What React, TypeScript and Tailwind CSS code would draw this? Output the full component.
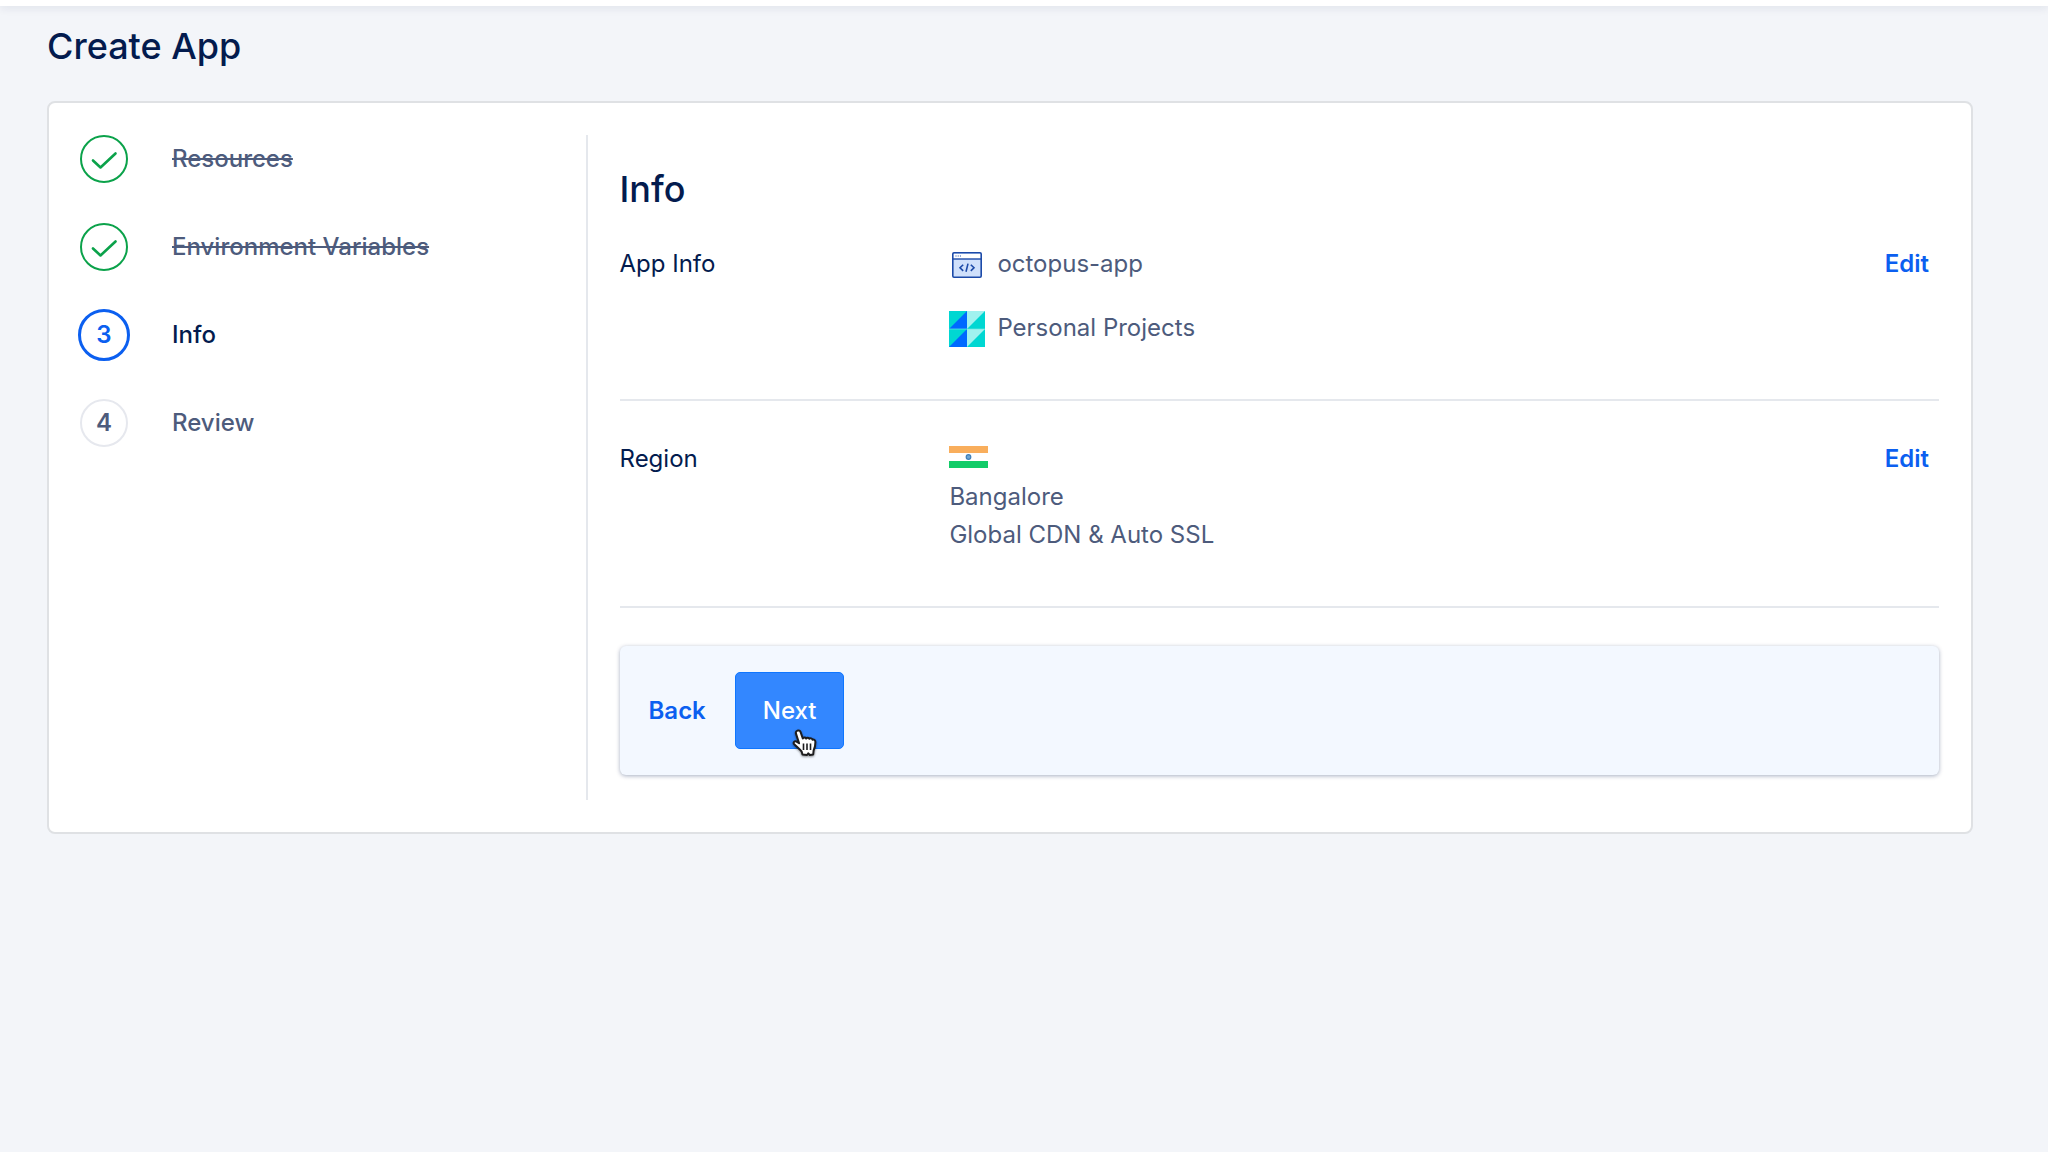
import type { ReactNode } from "react";

type StepState = "done" | "active" | "todo";

const steps: { label: string; state: StepState }[] = [
  { label: "Resources", state: "done" },
  { label: "Environment Variables", state: "done" },
  { label: "Info", state: "active" },
  { label: "Review", state: "todo" },
];

const circleStyle: Record<StepState, string> = {
  done: "size-12 border-2 border-[#0ba24a] text-[#0ba24a]",
  active: "size-[52px] border-3 border-[#0b5ff0] font-semibold text-[#0b5ff0]",
  todo: "size-12 border-2 border-[#e6e8ee] font-semibold text-[#4d5b7c]",
};

const labelStyle: Record<StepState, string> = {
  done: "text-[#4d5b7c] line-through decoration-2",
  active: "text-[#031b4e]",
  todo: "text-[#4d5b7c]",
};

function CheckIcon() {
  return (
    <svg viewBox="0 0 48 48" className="size-12 shrink-0" fill="none" stroke="currentColor" strokeWidth="2.6" strokeLinecap="round" strokeLinejoin="round" aria-hidden="true">
      <path d="M13 25.5 20.5 32.5 35.5 18.5" />
    </svg>
  );
}

function AppIcon() {
  return (
    <svg viewBox="0 0 36 36" className="size-9" fill="none" aria-hidden="true">
      <rect x="3.8" y="6.8" width="28.4" height="24.4" rx="1.2" fill="#cfe0fb" />
      <path d="M4 8h28v5H4z" fill="#fff" />
      <rect x="3.8" y="6.8" width="28.4" height="24.4" rx="1.2" stroke="#1c4aa8" strokeWidth="1.6" />
      <path d="M4 13h28" stroke="#1c4aa8" strokeWidth="1.4" />
      <path d="M6.5 10h1M8.7 10h1M10.9 10h1" stroke="#1c4aa8" strokeWidth="1.2" />
      <path d="M14.2 18.7 11 21.8l3.2 3.1M21.8 18.7l3.2 3.1-3.2 3.1M19 17.6l-2 8.2" stroke="#1c4aa8" strokeWidth="1.6" />
    </svg>
  );
}

function ProjectIcon() {
  return (
    <svg viewBox="0 0 36 36" className="mt-0.5 size-9" aria-hidden="true">
      <path d="M0 0h18v36H0z" fill="#0069ff" />
      <path d="M0 0h18L0 18zM0 18h18L0 36z" fill="#00d7d2" />
      <path d="M18 0h18v36H18z" fill="#00d7d2" />
      <path d="M18 0h18L18 18zM18 18h18L18 36z" fill="#a0f2ef" />
      <path d="M0 18h36" stroke="#6fe6e4" strokeWidth=".7" />
    </svg>
  );
}

function IndiaFlag() {
  return (
    <svg viewBox="0 0 39 22" className="h-[22px] w-[39px]" role="img" aria-label="India">
      <path d="M0 0h39v22H0z" fill="#fff" />
      <path d="M0 0h39v7H0z" fill="#f9ae5c" />
      <path d="M0 15h39v7H0z" fill="#12cc68" />
      <circle cx="19.5" cy="11" r="2.3" fill="#6fa6d3" stroke="#3f7fb8" strokeWidth="1.2" />
    </svg>
  );
}

function HandCursor() {
  return (
    <svg viewBox="0 0 26 28" className="pointer-events-none absolute top-14 left-14 h-7 w-[26px] drop-shadow-[0_1px_1px_rgba(0,0,0,0.45)]" aria-hidden="true">
      <path
        d="M5.400 1.700c1.400-.6 2.700.1 3.200 1.500l2.200 6.300c.7-1.100 2.700-1.300 3.300 0 .9-1.100 2.700-1 3.300.3 1-.9 2.700-.5 3.100.9 1.600-.5 2.900.5 2.900 2.200 0 4-.5 6-1.800 8.600l-.4 4-3.400.5-1.500-1.700-1.300 1.700-4.500-.4-.8-2.900C8 20.300 5 18.200 1.900 14.900c-.8-1.600.6-3.100 2.200-2.500l3 1.800L3.900 4.400c-.3-1.200.3-2.200 1.500-2.700z"
        fill="#fff"
        stroke="#1d1d1f"
        strokeWidth="2"
        strokeLinejoin="round"
      />
      <path d="M11.500 14.500v6.500M15 14.500v6.500M18.500 14.500v6.500" stroke="#1d1d1f" strokeWidth="1.600" />
    </svg>
  );
}

function InfoRow({ label, children }: { label: string; children: ReactNode }) {
  return (
    <div className="flex border-b-2 border-[#e5e8ed] pb-[52px] leading-[38px]">
      <dt className="w-1/4 shrink-0 text-[#031b4e]">{label}</dt>
      <dd className="min-w-0 grow text-[#4d5b7c]">{children}</dd>
      <dd className="shrink-0 pr-[10px]">
        <a href="#edit" aria-label={"Edit " + label} className="font-semibold text-[#0b5ff0]">
          Edit
        </a>
      </dd>
    </div>
  );
}

export default function App() {
  return (
    <div className="min-h-screen bg-[#f3f5f9] font-['Inter',sans-serif] text-[24px]">
      <div className="h-1.5 bg-white shadow-[0_2px_8px_rgba(3,27,78,0.1)]" />
      <main className="pr-[75px] pb-12 pl-[47px]">
        <h1 className="pt-4 text-[36px] leading-[48px] font-medium text-[#031b4e]">Create App</h1>

        <div className="mt-[31px] grid grid-cols-[3fr_8fr] rounded-lg border-2 border-[#dfe1e4] bg-white py-8 pr-8 pl-[29px]">
          <ol>
            {steps.map((step, i) => (
              <li key={step.label} aria-current={step.state === "active" ? "step" : undefined} className="mb-10 flex h-12 items-center font-medium">
                <span className="flex w-[52px] shrink-0 justify-center">
                  <span className={"flex shrink-0 items-center justify-center rounded-full " + circleStyle[step.state]}>
                    {step.state === "done" ? <CheckIcon /> : i + 1}
                  </span>
                </span>
                <span className={"ml-[42px] " + labelStyle[step.state]}>{step.label}</span>
              </li>
            ))}
          </ol>

          <section className="border-l-2 border-[#e5e8ed] pb-[25px] pl-8">
            <h2 className="pt-[30px] text-[36px] leading-[48px] font-medium text-[#031b4e]">Info</h2>
            <dl className="mt-8 flex flex-col gap-[39px]">
              <InfoRow label="App Info">
                <div className="flex flex-col gap-[26px]">
                  <div className="flex items-center gap-3">
                    <AppIcon />
                    octopus-app
                  </div>
                  <div className="flex items-center gap-3">
                    <ProjectIcon />
                    Personal Projects
                  </div>
                </div>
              </InfoRow>
              <InfoRow label="Region">
                <div className="flex h-[38px] items-start pt-1.5">
                  <IndiaFlag />
                </div>
                <div>Bangalore</div>
                <div>Global CDN &amp; Auto SSL</div>
              </InfoRow>
            </dl>

            <div className="mt-[38px] flex items-center gap-[29px] rounded-md bg-[#f3f8ff] py-[26px] pl-[29px] shadow-[0_1px_4px_rgba(3,27,78,0.35)]">
              <button type="button" className="font-semibold text-[#0b5ff0]">
                Back
              </button>
              <button type="button" className="relative h-[77px] rounded-[5px] border border-[#0f76ff] bg-[#3387ff] px-[27px] font-medium text-white">
                Next
                <HandCursor />
              </button>
            </div>
          </section>
        </div>
      </main>
    </div>
  );
}
